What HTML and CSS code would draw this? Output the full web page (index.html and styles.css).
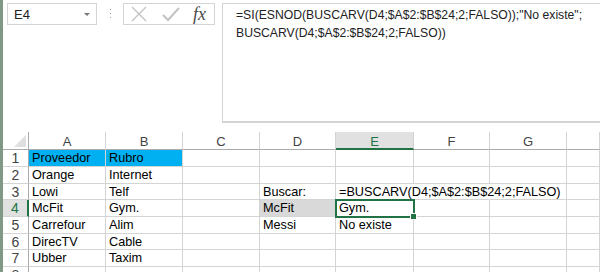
FILE: index.html
```html
<!DOCTYPE html>
<html lang="es">
<head>
    <meta charset="UTF-8">
    <title>BUSCARV - Excel</title>
    <link rel="stylesheet" href="styles.css">
</head>
<body>
    <div class="app">
        <div class="topbar">
            <div class="namebox">
                <span>E4</span>
                <span class="arrow"></span>
            </div>
            <div class="grip">
                <svg width="3" height="12" viewBox="0 0 3 12">
                    <rect x="1" y="1" width="1" height="1" fill="#a0a0a0"/>
                    <rect x="1" y="5" width="1" height="1" fill="#a0a0a0"/>
                    <rect x="1" y="9" width="1" height="1" fill="#a0a0a0"/>
                </svg>
            </div>
            <div class="fbuttons">
                <svg class="ico" width="18" height="16" viewBox="0 0 18 16">
                    <path d="M2 1 L16 15 M16 1 L2 15" stroke="#c3c3c3" stroke-width="1.4" fill="none"/>
                </svg>
                <svg class="ico" width="18" height="16" viewBox="0 0 18 16">
                    <path d="M1 9 L6 14 L17 2" stroke="#c3c3c3" stroke-width="2" fill="none"/>
                </svg>
                <span class="fx">fx</span>
            </div>
            <div class="formula">=SI(ESNOD(BUSCARV(D4;$A$2:$B$24;2;FALSO));"No existe";<br>BUSCARV(D4;$A$2:$B$24;2;FALSO))</div>
        </div>

        <div class="sheet">
            <!-- encabezados -->
            <div class="hd corner"><span class="tri"></span></div>
            <div class="hd col">A</div>
            <div class="hd col">B</div>
            <div class="hd col">C</div>
            <div class="hd col">D</div>
            <div class="hd col sel-col">E</div>
            <div class="hd col">F</div>
            <div class="hd col">G</div>
            <div class="hd col"></div>

            <div class="hd row">1</div>
            <div class="c blue">Proveedor</div>
            <div class="c blue">Rubro</div>
            <div class="c"></div>
            <div class="c"></div>
            <div class="c"></div>
            <div class="c"></div>
            <div class="c"></div>
            <div class="c"></div>

            <div class="hd row">2</div>
            <div class="c">Orange</div>
            <div class="c">Internet</div>
            <div class="c"></div>
            <div class="c"></div>
            <div class="c"></div>
            <div class="c"></div>
            <div class="c"></div>
            <div class="c"></div>

            <div class="hd row">3</div>
            <div class="c">Lowi</div>
            <div class="c">Telf</div>
            <div class="c"></div>
            <div class="c">Buscar:</div>
            <div class="c spill">=BUSCARV(D4;$A$2:$B$24;2;FALSO)</div>
            <div class="c spill"></div>
            <div class="c"></div>
            <div class="c"></div>

            <div class="hd row sel-row">4</div>
            <div class="c">McFit</div>
            <div class="c">Gym.</div>
            <div class="c"></div>
            <div class="c grey">McFit</div>
            <div class="c active">Gym.<span class="handle"></span></div>
            <div class="c"></div>
            <div class="c"></div>
            <div class="c"></div>

            <div class="hd row">5</div>
            <div class="c">Carrefour</div>
            <div class="c">Alim</div>
            <div class="c"></div>
            <div class="c">Messi</div>
            <div class="c">No existe</div>
            <div class="c"></div>
            <div class="c"></div>
            <div class="c"></div>

            <div class="hd row">6</div>
            <div class="c">DirecTV</div>
            <div class="c">Cable</div>
            <div class="c"></div>
            <div class="c"></div>
            <div class="c"></div>
            <div class="c"></div>
            <div class="c"></div>
            <div class="c"></div>

            <div class="hd row">7</div>
            <div class="c">Ubber</div>
            <div class="c">Taxim</div>
            <div class="c"></div>
            <div class="c"></div>
            <div class="c"></div>
            <div class="c"></div>
            <div class="c"></div>
            <div class="c"></div>

            <div class="hd row">8</div>
            <div class="c"></div>
            <div class="c"></div>
            <div class="c"></div>
            <div class="c"></div>
            <div class="c"></div>
            <div class="c"></div>
            <div class="c"></div>
            <div class="c"></div>
        </div>
    </div>
</body>
</html>
```

FILE: styles.css
```css
body {
    margin: 0;
    width: 600px;
    height: 272px;
    overflow: hidden;
    background: #ffffff;
    font-family: 'Liberation Sans', Arial, sans-serif;
    font-size: 12.7px;
    color: #000;
}

.app {
    height: 272px;
    border-left: 3px solid #7f9888;
    box-sizing: border-box;
}

/* barra de formulas */
.topbar {
    display: flex;
    align-items: flex-start;
    padding: 3px 0 0 4px;
    height: 132px;
    box-sizing: border-box;
}

.namebox {
    width: 90px;
    height: 22px;
    border: 1px solid #d4d4d4;
    box-sizing: border-box;
    display: flex;
    align-items: center;
    justify-content: space-between;
    padding: 0 6px 0 6px;
    color: #222;
    font-size: 13px;
}

.arrow {
    width: 0;
    height: 0;
    border-left: 3px solid transparent;
    border-right: 3px solid transparent;
    border-top: 3px solid #777;
}

.grip {
    width: 26px;
    height: 22px;
    display: flex;
    align-items: center;
    justify-content: center;
}

.fbuttons {
    width: 92px;
    height: 22px;
    border: 1px solid #d4d4d4;
    box-sizing: border-box;
    display: flex;
    align-items: center;
    padding-left: 6px;
    gap: 14px;
}

.fx {
    font-family: 'Liberation Serif', serif;
    font-style: italic;
    font-size: 18px;
    color: #4a4a4a;
    margin-left: -1px;
}

.formula {
    flex: 1;
    margin-left: 7px;
    margin-right: -4px;
    height: 120px;
    border: 1px solid #d4d4d4;
    border-bottom-width: 2px;
    box-sizing: border-box;
    padding: 2px 0 0 13px;
    line-height: 18px;
    font-size: 12.2px;
    color: #222;
    white-space: nowrap;
}

/* hoja */
.sheet {
    display: grid;
    grid-template-columns: 26px 77px 77px 77px 76px 78px 76px 77px 1fr;
    grid-template-rows: 18px 17px 17px 16px 17px 17px 16px 17px 17px;
}

.hd {
    box-sizing: border-box;
    color: #444;
    text-align: center;
    border-right: 1px solid #d4d4d4;
    border-bottom: 1px solid #d4d4d4;
    font-size: 13px;
}

.col {
    line-height: 20px;
    border-bottom-color: #ababab;
}

.row {
    line-height: 16px;
    border-right-color: #ababab;
    font-size: 14px;
}

.corner {
    position: relative;
    border-right-color: #ababab;
    border-bottom-color: #ababab;
}

.tri {
    position: absolute;
    right: 2px;
    bottom: 2px;
    width: 0;
    height: 0;
    border-left: 12px solid transparent;
    border-bottom: 12px solid #dfdfdf;
}

.sel-col {
    background: #e1e1e1;
    color: #217346;
    border-bottom: 2px solid #217346;
}

.sel-row {
    background: #e1e1e1;
    color: #217346;
    border-right: 2px solid #217346;
}

.c {
    box-sizing: border-box;
    border-right: 1px solid #d4d4d4;
    border-bottom: 1px solid #d4d4d4;
    padding-left: 3px;
    line-height: 16px;
    white-space: nowrap;
    position: relative;
}

.blue {
    background: #00b0f0;
}

.grey {
    background: #d9d9d9;
}

.spill {
    border-right-color: transparent;
    overflow: visible;
    z-index: 1;
}

.active {
    outline: 2px solid #217346;
    outline-offset: -1px;
    z-index: 2;
}

.handle {
    position: absolute;
    right: -4px;
    bottom: -4px;
    width: 5px;
    height: 5px;
    background: #217346;
    border: 1px solid #fff;
}
```
